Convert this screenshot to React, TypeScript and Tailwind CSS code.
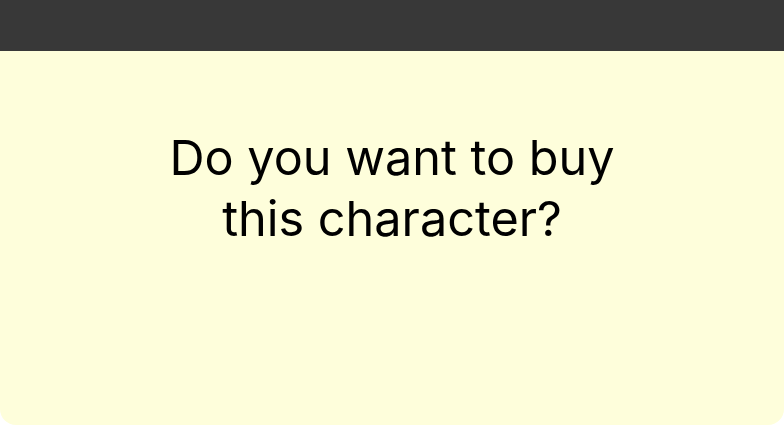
export default function App() {
  return (
    <div className="w-[784px] h-[425px] bg-white flex flex-col" style={{ fontFamily: 'Inter, "Noto Sans", sans-serif' }}>
      <div className="h-[51px] bg-[#383838]" />
      <div className="flex-1 bg-[#fefedb] rounded-b-2xl flex justify-center pt-[76px]">
        <h1 className="text-[48.6px] leading-[61px] text-black text-center font-normal">
          Do you want to buy
          <br />
          this character?
        </h1>
      </div>
    </div>
  );
}
